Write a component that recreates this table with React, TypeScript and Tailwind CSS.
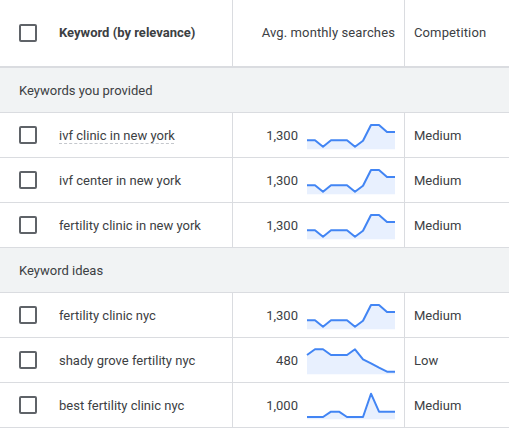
import React from "react";

type Row = { kw: string; vol: string; comp: string; pts: number[]; dashed?: boolean };

const base = [20.3, 20.3, 26.7, 20.3, 20.3, 20.3, 26.7, 20.8, 5, 5, 12, 12];

const provided: Row[] = [
  { kw: "ivf clinic in new york", vol: "1,300", comp: "Medium", pts: base, dashed: true },
  { kw: "ivf center in new york", vol: "1,300", comp: "Medium", pts: base },
  { kw: "fertility clinic in new york", vol: "1,300", comp: "Medium", pts: base },
];

const ideas: Row[] = [
  { kw: "fertility clinic nyc", vol: "1,300", comp: "Medium", pts: base },
  {
    kw: "shady grove fertility nyc",
    vol: "480",
    comp: "Low",
    pts: [10, 4.3, 4.3, 10, 10, 10, 4.3, 14.3, 18.3, 22.7, 26.7, 26.7],
  },
  {
    kw: "best fertility clinic nyc",
    vol: "1,000",
    comp: "Medium",
    pts: [27, 27, 27, 21.7, 21.7, 27, 27, 27, 3.7, 21.7, 21.7, 21.7],
  },
];

function Checkbox() {
  return <div className="w-[18px] h-[18px] border-2 border-[#5f6368] rounded-[2px] shrink-0" />;
}

function Spark({ pts }: { pts: number[] }) {
  const line = pts.map((y, i) => `${i * 8},${y}`).join(" ");
  const area = `0,29.3 ${line} 88,29.3`;
  return (
    <svg width="90" height="30" viewBox="-1 0 90 30" className="shrink-0">
      <polygon points={area} fill="#e8f0fe" />
      <polyline points={line} fill="none" stroke="#4285f4" strokeWidth="2" strokeLinejoin="round" />
    </svg>
  );
}

function DataRow({ r }: { r: Row }) {
  return (
    <div className="flex h-[45px] border-b border-[#dadce0]">
      <div className="w-[233px] flex items-center pl-[19px] gap-[22px] border-r border-[#dadce0]">
        <Checkbox />
        <span
          className={
            r.dashed
              ? "pt-px underline decoration-dashed decoration-[#c4c7cc] underline-offset-[3px] decoration-1"
              : "pt-px"
          }
        >
          {r.kw}
        </span>
      </div>
      <div className="w-[172px] flex items-center justify-end pr-[8px] gap-[8px] border-r border-[#dadce0]">
        <span className="pt-px">{r.vol}</span>
        <Spark pts={r.pts} />
      </div>
      <div className="flex-1 flex items-center pl-[9px] pt-px">{r.comp}</div>
    </div>
  );
}

function Section({ label }: { label: string }) {
  return (
    <div className="h-[45px] border-b border-[#dadce0] bg-[#f1f3f4] flex items-center pl-[19px] pt-px">
      {label}
    </div>
  );
}

export default function App() {
  return (
    <div className="w-[509px] h-[428px] bg-white overflow-hidden text-[13px] text-[#3c4043] font-['Roboto',sans-serif]">
      <div className="flex h-[68px] border-b-2 border-[#dadce0]">
        <div className="w-[233px] flex items-center pl-[19px] gap-[22px] border-r border-[#dadce0]">
          <Checkbox />
          <span className="font-bold text-[#3c4043]">Keyword (by relevance)</span>
        </div>
        <div className="w-[172px] flex items-center justify-end pr-[9px] border-r border-[#dadce0] tracking-[0.12px]">
          Avg. monthly searches
        </div>
        <div className="flex-1 flex items-center pl-[9px] tracking-[0.12px]">Competition</div>
      </div>
      <Section label="Keywords you provided" />
      {provided.map((r) => (
        <DataRow key={r.kw} r={r} />
      ))}
      <Section label="Keyword ideas" />
      {ideas.map((r) => (
        <DataRow key={r.kw} r={r} />
      ))}
    </div>
  );
}
